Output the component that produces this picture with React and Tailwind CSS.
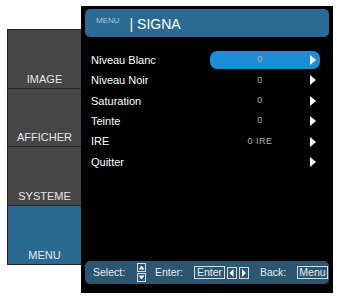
import React from "react";

const rows = [
  { label: "Niveau Blanc", value: "0", active: true },
  { label: "Niveau Noir", value: "0" },
  { label: "Saturation", value: "0" },
  { label: "Teinte", value: "0" },
  { label: "IRE", value: "0 IRE" },
  { label: "Quitter", value: "" },
];

const tabs = [
  { label: "IMAGE", h: "h-[58px]" },
  { label: "AFFICHER", h: "h-[59px]" },
  { label: "SYSTEME", h: "h-[59px]" },
  { label: "MENU", h: "h-[60px]", active: true },
];

function Arrow() {
  return (
    <svg width="6" height="10" viewBox="0 0 6 10">
      <path d="M0 0 L6 5 L0 10 Z" fill="#ffffff" />
    </svg>
  );
}

function KeyTri({ dir }) {
  const vert = dir === "up" || dir === "down";
  const d =
    dir === "up"
      ? "M1.5 6.5 L4.5 2.5 L7.5 6.5 Z"
      : dir === "down"
      ? "M1.5 2.5 L4.5 6.5 L7.5 2.5 Z"
      : dir === "left"
      ? "M6.5 2 L2.5 6 L6.5 10 Z"
      : "M3 2 L7 6 L3 10 Z";
  return (
    <svg width={vert ? 9 : 10} height={vert ? 9 : 12} viewBox={vert ? "0 0 9 9" : "0 0 10 12"}>
      <rect
        x="0.5"
        y="0.5"
        width={vert ? 8 : 9}
        height={vert ? 8 : 11}
        fill="#2b5672"
        stroke="#d8dde2"
      />
      <path d={d} fill="#ffffff" />
    </svg>
  );
}

export default function App() {
  return (
    <div
      className="w-[337px] h-[298px] bg-white flex pl-[7px] pt-[6px]"
      style={{ fontFamily: '"Liberation Sans", Arial, sans-serif' }}
    >
      <div className="mt-[23px] w-[74px] h-[236px] flex flex-col bg-[#1b2630] border-l border-t border-b border-[#1b2630]">
        {tabs.map((t, i) => (
          <div
            key={t.label}
            className={`${t.h} flex items-end justify-center pb-[2px] ${
              t.active ? "bg-[#2a6a90]" : "bg-[#464646]"
            } ${i > 0 ? "border-t border-[#1c2530]" : ""}`}
          >
            <span className="text-[11px] leading-[13px] text-[#e6e8ea]">{t.label}</span>
          </div>
        ))}
      </div>
      <div className="w-[252px] h-[287px] bg-black flex flex-col">
        <div className="mx-[4px] mt-[3px] h-[28px] rounded-[5px] bg-[#2b6a92] flex items-center pl-[11px]">
          <span className="text-[8px] leading-none text-[#a9c7dc] mb-[5px]">MENU</span>
          <span className="text-[14px] leading-none text-white ml-[10px] mt-[2px]">| SIGNA</span>
        </div>
        <div className="mt-[14px] flex flex-col pl-[10px] pr-[13px]">
          {rows.map((r) => (
            <div key={r.label} className="h-[20.4px] flex items-start">
              <div className="flex-1 h-[18px] flex items-center text-[11px] text-white">
                {r.label}
              </div>
              <div
                className={`w-[110px] h-[18px] rounded-[7px] flex items-center ${
                  r.active ? "bg-[#1d8ed6]" : ""
                }`}
              >
                <div className="w-[100px] text-center text-[9px] text-[#b4b4b4] tracking-[0.5px]">
                  {r.value}
                </div>
                <Arrow />
              </div>
            </div>
          ))}
        </div>
        <div className="mt-auto mb-[9px] mx-[4px] h-[23px] rounded-[5px] bg-[#2b5672] flex items-center pl-[8px] text-[10.5px] text-[#e8ecef]">
          <span className="w-[32px] whitespace-nowrap">Select:</span>
          <div className="ml-[12px] flex flex-col gap-[1px]">
            <KeyTri dir="up" />
            <KeyTri dir="down" />
          </div>
          <span className="ml-[9px] w-[29px] whitespace-nowrap">Enter:</span>
          <span className="ml-[10px] w-[31px] text-center border border-[#d8dde2] h-[13px] leading-[11px] text-[10.5px]">
            Enter
          </span>
          <div className="ml-[2px] flex gap-[2px]">
            <KeyTri dir="left" />
            <KeyTri dir="right" />
          </div>
          <span className="ml-[11px] w-[27px] whitespace-nowrap">Back:</span>
          <span className="ml-[10px] w-[31px] text-center border border-[#d8dde2] h-[13px] leading-[11px] text-[10.5px]">
            Menu
          </span>
        </div>
      </div>
    </div>
  );
}
